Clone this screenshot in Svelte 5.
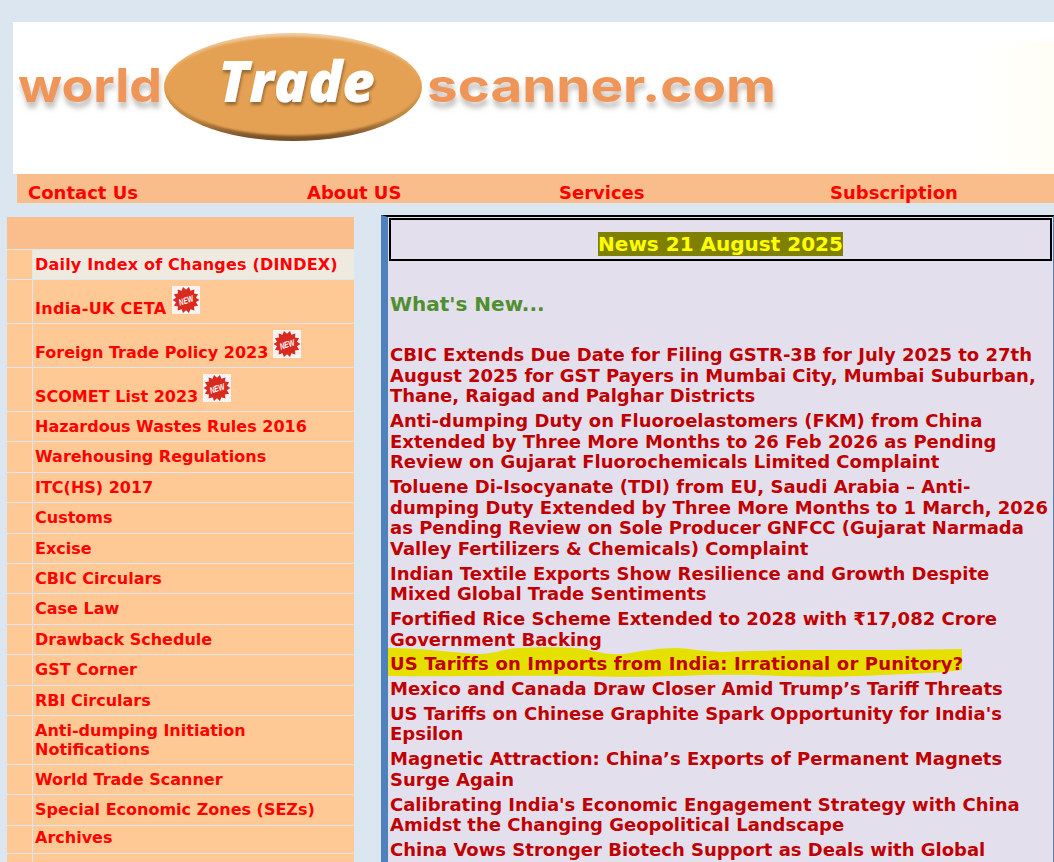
<script lang="ts">
  const navLinks = ['Contact Us', 'About US', 'Services', 'Subscription'];

  const menu = [
    { label: 'Daily Index of Changes (DINDEX)', kind: 'current' },
    { label: 'India-UK CETA', kind: 'fresh roomy', badge: true },
    { label: 'Foreign Trade Policy 2023', kind: 'fresh', badge: true },
    { label: 'SCOMET List 2023', kind: 'fresh', badge: true },
    { label: 'Hazardous Wastes Rules 2016' },
    { label: 'Warehousing Regulations' },
    { label: 'ITC(HS) 2017' },
    { label: 'Customs' },
    { label: 'Excise' },
    { label: 'CBIC Circulars' },
    { label: 'Case Law' },
    { label: 'Drawback Schedule' },
    { label: 'GST Corner' },
    { label: 'RBI Circulars' },
    { label: 'Anti-dumping Initiation Notifications', kind: 'double' },
    { label: 'World Trade Scanner' },
    { label: 'Special Economic Zones (SEZs)' },
    { label: 'Archives', kind: 'last' }
  ];

  const news = [
    'CBIC Extends Due Date for Filing GSTR-3B for July 2025 to 27th August 2025 for GST Payers in Mumbai City, Mumbai Suburban, Thane, Raigad and Palghar Districts',
    'Anti-dumping Duty on Fluoroelastomers (FKM) from China Extended by Three More Months to 26 Feb 2026 as Pending Review on Gujarat Fluorochemicals Limited Complaint',
    'Toluene Di-Isocyanate (TDI) from EU, Saudi Arabia – Anti-dumping Duty Extended by Three More Months to 1 March, 2026 as Pending Review on Sole Producer GNFCC (Gujarat Narmada Valley Fertilizers & Chemicals) Complaint',
    'Indian Textile Exports Show Resilience and Growth Despite Mixed Global Trade Sentiments',
    'Fortified Rice Scheme Extended to 2028 with ₹17,082 Crore Government Backing',
    'US Tariffs on Imports from India: Irrational or Punitory?',
    'Mexico and Canada Draw Closer Amid Trump’s Tariff Threats',
    "US Tariffs on Chinese Graphite Spark Opportunity for India's Epsilon",
    'Magnetic Attraction: China’s Exports of Permanent Magnets Surge Again',
    "Calibrating India's Economic Engagement Strategy with China Amidst the Changing Geopolitical Landscape",
    'China Vows Stronger Biotech Support as Deals with Global Pharma Rise'
  ];

  // starburst outline for the NEW badge
  const burst = Array.from({ length: 28 }, (_, i) => {
    const r = i % 2 ? 10.2 : 13.4;
    const a = (i * Math.PI) / 14;
    return `${(14 + r * Math.cos(a)).toFixed(1)},${(14 + r * Math.sin(a)).toFixed(1)}`;
  }).join(' ');
</script>

<div class="page">
  <header class="banner">
    <svg class="logo" viewBox="0 0 1041 152" width="1041" height="152" role="img" aria-label="world Trade scanner.com">
      <defs>
        <filter id="wordShadow" x="-5%" y="-30%" width="110%" height="170%">
          <feDropShadow dx="1" dy="6" stdDeviation="2.6" flood-color="#8c8780" flood-opacity="0.5" />
        </filter>
        <filter id="tradeShadow" x="-10%" y="-20%" width="120%" height="150%">
          <feDropShadow dx="1" dy="3" stdDeviation="1.8" flood-color="#7a5324" flood-opacity="0.7" />
        </filter>
        <filter id="edge"><feGaussianBlur stdDeviation="0.8" /></filter>
        <linearGradient id="rim" x1="0" y1="0" x2="0" y2="1">
          <stop offset="0" stop-color="#f0cca0" />
          <stop offset="0.45" stop-color="#e5a152" />
          <stop offset="0.8" stop-color="#b98342" />
          <stop offset="1" stop-color="#6f4a22" />
        </linearGradient>
        <linearGradient id="glow" x1="0" y1="0" x2="1" y2="0">
          <stop offset="0" stop-color="#fffff4" stop-opacity="0" />
          <stop offset="1" stop-color="#fffdec" />
        </linearGradient>
      </defs>
      <rect x="960" y="20" width="81" height="130" fill="url(#glow)" opacity="0.6" />
      <g class="wordmark" filter="url(#wordShadow)">
        <text x="5" y="80" textLength="144" lengthAdjust="spacingAndGlyphs">world</text>
        <text x="414" y="80" textLength="349" lengthAdjust="spacingAndGlyphs">scanner.com</text>
      </g>
      <ellipse cx="280" cy="65" rx="129" ry="54" fill="url(#rim)" />
      <ellipse cx="280" cy="64" rx="127" ry="49.5" fill="#e5a152" filter="url(#edge)" />
      <text class="trade" x="205" y="80" textLength="157" lengthAdjust="spacingAndGlyphs" filter="url(#tradeShadow)">Trade</text>
    </svg>
  </header>

  <nav class="topnav">
    {#each navLinks as link}
      <span>{link}</span>
    {/each}
  </nav>

  <div class="columns">
    <aside class="sidebar">
      <div class="side-head"></div>
      {#each menu as item}
        <div class="side-row {item.kind ?? ''}">
          <div class="stub"></div>
          <div class="cell">
            <span>{item.label}</span>
            {#if item.badge}
              <svg class="new-badge" viewBox="0 0 28 28" width="28" height="28" aria-label="new">
                <rect width="28" height="28" fill="#f6f4f2" />
                <polygon points={burst} fill="#d92a20" />
                <text x="14" y="17.5" textLength="15" lengthAdjust="spacingAndGlyphs" transform="rotate(-18 14 14)">NEW</text>
              </svg>
            {/if}
          </div>
        </div>
      {/each}
      <div class="side-row tail"><div class="stub"></div><div class="cell"></div></div>
    </aside>

    <main class="content">
      <div class="date-box"><span>News 21 August 2025</span></div>
      <h2>What's New...</h2>
      <div class="headlines">
        {#each news as title, i}
          <p class:marked={i === 5}>
            {#if i === 5}
              <svg class="marker" viewBox="0 0 576 34" width="576" height="34" aria-hidden="true">
                <path d="M0 2 C30 2 60 6 90 8 C105 8 115 3 130 2 C155 1 180 1 195 3 C210 6 220 9 235 8 C255 5 270 2 290 2 C305 3 320 6 335 6 C370 5 400 4 430 4 C480 4 530 4 574 3 L574 24 C550 27 520 28 495 29 C460 31 420 31 390 30 C350 28 320 29 290 30 C260 31 220 31 190 30 C130 29 70 31 0 30 Z" fill="#e5e000" />
              </svg>
            {/if}
            <span>{title}</span>
          </p>
        {/each}
      </div>
    </main>
  </div>
</div>

<style>
  :global(body) {
    margin: 0;
    background: #dce6f1;
    overflow: hidden;
  }

  .page {
    height: 862px;
    overflow: hidden;
    padding-top: 22px;
    box-sizing: border-box;
    font-family: "DejaVu Sans", Verdana, sans-serif;
    font-weight: bold;
  }

  .banner {
    margin-left: 13px;
    height: 152px;
    background: #fff;
    overflow: hidden;
  }

  .logo {
    display: block;
  }

  .wordmark text {
    font-family: Inter, sans-serif;
    font-weight: 700;
    font-size: 46px;
    fill: #ef9558;
  }

  .trade {
    font-family: "Open Sans", sans-serif;
    font-style: italic;
    font-weight: 800;
    font-size: 56px;
    fill: #fff;
  }

  .topnav {
    margin-left: 17px;
    height: 29px;
    background: #f8bd8b;
    display: grid;
    grid-template-columns: 279px 252px 271px 1fr;
    padding: 7px 0 0 11px;
    box-sizing: border-box;
    color: #f00;
    font-size: 18px;
    line-height: 24px;
  }

  .columns {
    display: flex;
    align-items: flex-start;
    margin-top: 12px;
    padding-left: 7px;
  }

  .sidebar {
    width: 347px;
    margin-top: 2px;
    flex: none;
    color: #f00;
    font-size: 16px;
    line-height: 19px;
  }

  .side-head {
    height: 32px;
    background: #fabd8c;
  }

  .side-row {
    display: flex;
    height: 29.4px;
    margin-top: 1px;
  }

  .stub {
    width: 25px;
    flex: none;
    background: #fec994;
  }

  .cell {
    flex: 1;
    margin-left: 1px;
    padding: 5px 0 0 2px;
    background: #fec994;
    white-space: nowrap;
    box-sizing: border-box;
  }

  .current {
    height: 29px;
  }

  .current .cell {
    background: #eeeae0;
    letter-spacing: 0.2px;
  }

  .fresh {
    height: 43px;
  }

  .fresh .cell {
    display: flex;
    align-items: flex-end;
    padding: 0 0 5px 2px;
  }

  .roomy .cell {
    letter-spacing: 0.32px;
  }

  .new-badge {
    margin: 0 0 4px 5px;
    flex: none;
  }

  .new-badge text {
    font-family: "Liberation Sans", sans-serif;
    font-size: 9px;
    font-weight: bold;
    font-style: italic;
    fill: #fff;
    text-anchor: middle;
  }

  .double {
    height: 48px;
  }

  .double .cell {
    white-space: normal;
  }

  .last {
    height: 27px;
  }

  .last .cell {
    padding-top: 2px;
  }

  .tail {
    height: 20px;
  }

  .content {
    margin-left: 27px;
    flex: 1;
    min-width: 0;
    height: 700px;
    background: #e4dfec;
    border-left: 7px solid #4f81bd;
    border-top: 2px solid #000;
    border-right: 1px solid #4f81bd;
    padding: 1px 1px 0 1px;
  }

  .date-box {
    height: 43px;
    box-sizing: border-box;
    border: 2px solid #000;
    text-align: center;
    font-size: 20px;
    line-height: 24px;
    padding-top: 12px;
  }

  .date-box span {
    background: #808000;
    color: #ff0;
  }

  h2 {
    margin: 31px 0 0 1px;
    color: #4f8f2f;
    font-size: 20px;
    line-height: 24px;
    font-weight: bold;
  }

  .headlines {
    margin-top: 29px;
    padding-left: 1px;
    color: #c00000;
    font-size: 18px;
    line-height: 20.5px;
  }

  p {
    margin: 0 0 4.5px;
  }

  .marked {
    position: relative;
    margin-top: -1px;
  }

  .marked span {
    position: relative;
    letter-spacing: 0.16px;
  }

  .marker {
    position: absolute;
    left: -2px;
    top: -8px;
  }
</style>
